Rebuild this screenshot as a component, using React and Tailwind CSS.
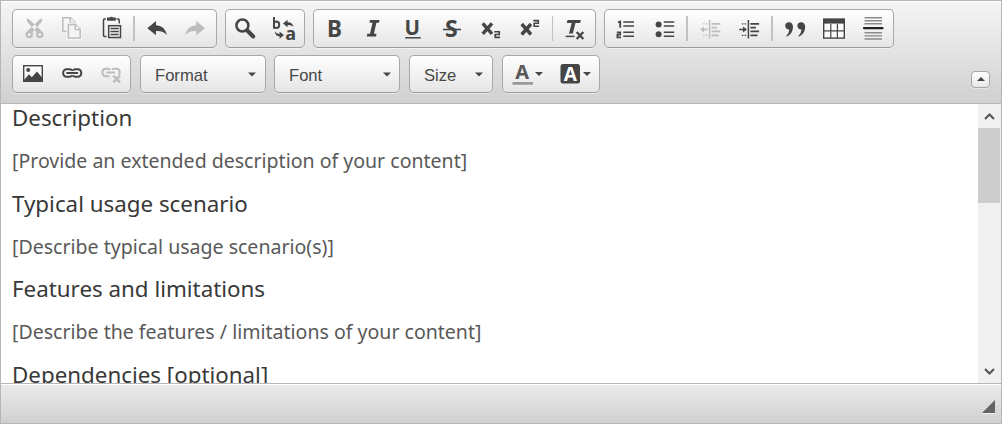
import React from "react";

const D = "#454545";
const L = "#bdbdbd";

function Icon({ x, y = 10, w = 39, h = 37, label, children }) {
  return (
    <svg width={w} height={h} viewBox={`${x} ${y} ${w} ${h}`} className="block shrink-0" role="img" aria-label={label}>
      {children}
    </svg>
  );
}

function Group({ className = "", children }) {
  return (
    <div
      className={`flex shrink-0 items-center rounded-[5px] border border-[#a8a8a8] border-b-[#9a9a9a] bg-gradient-to-b from-white to-[#e5e5e5] shadow-[0_1px_0_rgba(255,255,255,0.5)] ${className}`}
    >
      {children}
    </div>
  );
}

function Combo({ label, className }) {
  return (
    <Group className={`h-[38px] justify-between pl-[14px] ${className}`}>
      <span className="pt-[4px] font-['Liberation_Sans',Arial,sans-serif] text-[16.6px] leading-[20px] text-[#474747]">{label}</span>
      <svg width="8" height="5" viewBox="0 0 8 5" className="block">
        <path d="M0 .5H8L4 4.5Z" fill={D} />
      </svg>
    </Group>
  );
}

function Separator({ className = "w-[2px]" }) {
  return <div className={`h-[25px] shrink-0 bg-[#c2c2c2] ${className}`} />;
}

const glyph = { fontFamily: "'Noto Sans', 'Open Sans', sans-serif", fontWeight: 700, fill: D };

function ClipboardGroup() {
  return (
    <Group className="h-[39px] w-[205px]">
      <Icon x={13} w={40} label="Cut">
        <g fill="none" stroke={L} strokeWidth="2.2">
          <circle cx="29.3" cy="34.4" r="2.6" />
          <circle cx="39.8" cy="34.4" r="2.6" />
        </g>
        <path d="M27.2 18.2L29.3 19.4L41 30.6L37.6 33.5L27.8 22.5Q26.1 20 27.2 18.2ZM41.8 18.2L39.7 19.4L28 30.6L31.4 33.5L41.2 22.5Q42.9 20 41.8 18.2Z" fill={L} />
      </Icon>
      <Icon x={53} label="Copy">
        <g fill="#f5f5f5" stroke={L} strokeWidth="1.5">
          <path d="M62.8 17.8H70.5L75.2 22.5V31.3H62.8Z" />
          <path d="M70.3 17.8V22.7H75.2" />
          <path d="M68.4 24.5H75.5L80.2 29.2V37.9H68.4Z" stroke="#f5f5f5" strokeWidth="4" />
          <path d="M68.4 24.5H75.5L80.2 29.2V37.9H68.4Z" />
          <path d="M75.3 24.5V29.4H80.2" />
        </g>
      </Icon>
      <Icon x={92} w={40} label="Paste">
        <path d="M106 19H104.5Q103.5 19 103.5 20V35.5Q103.5 36.5 104.5 36.5H106.5M116.5 19H118.2Q119.2 19 119.2 20V23.5" fill="none" stroke={D} strokeWidth="1.5" />
        <path d="M107 17.5H109.5Q111.3 16 113.2 17.5H115.8V20.8H107Z" fill={D} />
        <rect x="108.7" y="25.7" width="11.8" height="11.8" fill="#f5f5f5" stroke={D} strokeWidth="1.5" />
        <path d="M110.5 28.5H118.7M110.5 31.5H118.7M110.5 34.5H118.7" stroke={D} strokeWidth="1.4" />
      </Icon>
      <div className="w-px shrink-0" />
      <Separator />
      <Icon x={136} w={40} label="Undo">
        <path d="M148.3 28.2L157 21V25.3Q165.5 25.5 168 35Q163.5 30.2 157 31V35.3Z" fill={D} />
      </Icon>
      <Icon x={176} w={38} label="Redo">
        <path d="M206 28.2L197.3 21V25.3Q188.5 25.5 186.2 35Q190.7 30.2 197.3 31V35.3Z" fill={L} />
      </Icon>
    </Group>
  );
}

function SearchGroup() {
  return (
    <Group className="h-[39px] w-[80px]">
      <Icon x={226} label="Find">
        <circle cx="242.4" cy="25.5" r="6" fill="none" stroke={D} strokeWidth="2.5" />
        <path d="M247.3 30.5L253.2 36.5" stroke={D} strokeWidth="4" strokeLinecap="round" />
      </Icon>
      <Icon x={265} label="Replace">
        <path d="M274 17V28.7M274 22.7Q275 21.4 276.8 21.4Q279.2 21.6 279.2 24.8Q279.2 28 276.5 28Q275 28 274 27" fill="none" stroke={D} strokeWidth="2" />
        <text x="285.2" y="39.6" fontSize="18" style={glyph}>a</text>
        <path d="M283 23.5L287.6 19.7V22.4Q291.5 21.8 293.7 26.7Q290.8 24.8 287.6 25V27.3Z" fill={D} />
        <path d="M284 35L279.6 31.8V34Q276.3 34.2 274.7 31.2Q275.5 36.7 279.6 36.3V38.7Z" fill={D} />
      </Icon>
    </Group>
  );
}

function StyleGroup() {
  return (
    <Group className="h-[39px] w-[283px]">
      <Icon x={314} w={40} label="Bold">
        <text x="327" y="36.5" fontSize="22.5" style={glyph}>B</text>
      </Icon>
      <Icon x={354} label="Italic">
        <path d="M370 20H379.4L379 22.7H376.4L373.9 33.8H376.6L376 36.5H366.8L367.3 33.8H370L372.5 22.7H369.5Z" fill={D} />
      </Icon>
      <Icon x={393} label="Underline">
        <text x="404.4" y="35" fontSize="20.5" style={glyph}>U</text>
        <path d="M405.2 37.8H420.7" stroke={D} strokeWidth="1.5" />
      </Icon>
      <Icon x={432} label="Strikethrough">
        <text x="445" y="36.6" fontSize="23" style={glyph}>S</text>
        <path d="M443 29.5H461" stroke={D} strokeWidth="1.6" />
      </Icon>
      <Icon x={471} label="Subscript">
        <path d="M482.7 23.4L492 33.9M492 23.4L482.7 33.9" stroke={D} strokeWidth="3.4" />
        <path d="M494.3 31.8H499.3V34.5H495.2V37.4H500" fill="none" stroke={D} strokeWidth="1.6" />
      </Icon>
      <Icon x={510} label="Superscript">
        <path d="M521.7 24L531 34.5M531 24L521.7 34.5" stroke={D} strokeWidth="3.4" />
        <path d="M533.3 20.6H538.3V23.3H534.2V26.2H539" fill="none" stroke={D} strokeWidth="1.6" />
      </Icon>
      <div className="w-[3px] shrink-0" />
      <Separator className="w-px" />
      <Icon x={553} label="Remove Format">
        <path d="M567.5 20H580.8L580.2 23H575.5L572.8 33.5H569L571.7 23H566.8Z" fill={D} />
        <path d="M565.7 36.4H574.5" stroke={D} strokeWidth="1.5" />
        <path d="M576.7 32L583.3 39M583.3 32L576.7 39" stroke={D} strokeWidth="2.3" />
      </Icon>
    </Group>
  );
}

function IndentLines({ c, x }) {
  return (
    <g stroke={c}>
      <path d={`M${x} 20V38.5`} strokeWidth="1.5" />
      <path d={`M${x + 2} 23.8H${x + 10.7}M${x + 2} 27.6H${x + 7.5}M${x + 2} 31.4H${x + 10.7}M${x + 2} 35.3H${x + 9}`} strokeWidth="1.7" />
      <path d={`M${x - 6.5} 23.8H${x - 1}M${x - 6.5} 35.3H${x - 1}`} strokeWidth="1.3" strokeDasharray="1.5 1.2" />
    </g>
  );
}

function BlockGroup() {
  return (
    <Group className="h-[39px] w-[290px]">
      <Icon x={605} w={40} label="Numbered List">
        <path d="M618 22.4L620.2 21.5V27.8M616.8 32.4H620.2V34.7H617.4V37.3H621" fill="none" stroke={D} strokeWidth="1.8" />
        <path d="M623.3 22H634M623.3 26H634M623.3 32.2H634M623.3 36.2H634" stroke={D} strokeWidth="1.6" />
      </Icon>
      <Icon x={645} label="Bulleted List">
        <circle cx="658.6" cy="24.4" r="3" fill={D} />
        <circle cx="658.6" cy="34.2" r="3" fill={D} />
        <path d="M663.8 22H674.2M663.8 26H674.2M663.8 32.2H674.2M663.8 36.2H674.2" stroke={D} strokeWidth="1.6" />
      </Icon>
      <div className="w-[2px] shrink-0" />
      <Separator />
      <Icon x={688} w={41} label="Decrease Indent">
        <IndentLines c={L} x={709.6} />
        <path d="M707.5 29.5H702" stroke={L} strokeWidth="1.6" />
        <path d="M700.2 29.5L704 26.6V32.4Z" fill={L} />
      </Icon>
      <Icon x={729} w={41} label="Increase Indent">
        <IndentLines c={D} x={748.4} />
        <path d="M739.3 29.5H744" stroke={D} strokeWidth="1.6" />
        <path d="M747 29.5L743 26.4V32.6Z" fill={D} />
      </Icon>
      <div className="w-px shrink-0" />
      <Separator />
      <Icon x={773} w={42} label="Block Quote">
        <path d="M788.8 22.3Q792.9 22.3 793 27Q793 33.4 786.6 36.8L786.2 36Q789.3 33 789.3 29.5Q785.2 29.4 785.2 25.8Q785.3 22.5 788.8 22.3Z" fill={D} />
        <path d="M801 22.3Q805.1 22.3 805.2 27Q805.2 33.4 798.8 36.8L798.4 36Q801.5 33 801.5 29.5Q797.4 29.4 797.4 25.8Q797.5 22.5 801 22.3Z" fill={D} />
      </Icon>
      <Icon x={815} label="Table">
        <rect x="823.7" y="19.3" width="20.6" height="18.8" fill="#fafafa" stroke={D} strokeWidth="1.4" />
        <path d="M823 18.6H845V23.6H823Z" fill={D} />
        <path d="M824 30.8H844M830.8 24V38M837.4 24V38" stroke={D} strokeWidth="1.2" />
      </Icon>
      <Icon x={854} label="Horizontal Line">
        <path d="M864.5 17.7H882M864.5 20.8H882M864.5 23.7H882M864.5 32.8H882M864.5 35.9H882M864.5 39H882" stroke="#8b8b8b" strokeWidth="1.4" />
        <path d="M864 28.2H882.5" stroke="#222" strokeWidth="2.2" strokeLinecap="round" />
      </Icon>
    </Group>
  );
}

function Chain({ c, x, y }) {
  return (
    <g fill="none" stroke={c} strokeWidth="2">
      <rect x={x} y={y} width="9.5" height="7.6" rx="3.4" />
      <rect x={x + 9} y={y} width="9" height="7.6" rx="3.4" />
      <path d={`M${x + 4} ${y + 3.8}H${x + 14}`} stroke="#f4f4f4" strokeWidth="4.2" />
      <path d={`M${x + 4} ${y + 3.8}H${x + 14}`} strokeWidth="2.2" strokeLinecap="round" />
    </g>
  );
}

function InsertGroup() {
  return (
    <Group className="h-[38px] w-[119px]">
      <Icon x={13} y={56} h={36} label="Image">
        <rect x="23.7" y="65.7" width="18.6" height="15.6" fill="#fafafa" stroke={D} strokeWidth="1.4" />
        <circle cx="28.2" cy="70" r="2" fill={D} />
        <path d="M24 80L29 74.3L31.8 77.2L37 71.5L42 77.5V81H24Z" fill={D} />
      </Icon>
      <Icon x={52} y={56} h={36} label="Link">
        <Chain c={D} x={63.2} y={69.2} />
      </Icon>
      <Icon x={91} y={56} h={36} label="Unlink">
        <g fill="none" stroke={L} strokeWidth="2">
          <path d="M110 69.7Q109 68.7 107.5 68.7H105.6Q102.4 68.7 102.4 72.3Q102.4 76.2 105.6 76.2H109.5M112 69.7Q113 68.7 114.5 68.7H116.6Q119.7 68.7 119.7 72.3Q119.7 74 118.7 74.8M106.3 72.5H115" />
          <path d="M113.3 75.7L120 82.3M120 75.7L113.3 82.3" strokeWidth="2.5" />
        </g>
      </Icon>
    </Group>
  );
}

function ColorGroup() {
  return (
    <Group className="h-[38px] w-[98px]">
      <Icon x={503} y={56} w={48} h={36} label="Text Color">
        <text x="515.2" y="79.3" fontSize="20" style={{ ...glyph, fill: "#585858" }}>A</text>
        <path d="M512.5 83.4H533" stroke="#959595" strokeWidth="2.6" />
        <path d="M535 72H543L539 76Z" fill={D} />
      </Icon>
      <Icon x={551} y={56} w={48} h={36} label="Background Color">
        <rect x="560.5" y="64" width="19.5" height="19.5" rx="2.5" fill={D} />
        <text x="563.7" y="80.8" fontSize="19" style={{ ...glyph, fill: "#fff" }}>A</text>
        <path d="M583 72H591L587 76Z" fill={D} />
      </Icon>
    </Group>
  );
}

function Toolbar() {
  return (
    <div className="flex h-[103px] shrink-0 justify-between border-b border-[#b6b6b6] bg-gradient-to-b from-[#f5f5f5] to-[#cfd1cf] pl-[11px] pr-[11px] pt-[8px] shadow-[inset_0_1px_0_#fff]">
      <div className="flex flex-col gap-[7px]">
        <div className="flex">
          <ClipboardGroup />
          <div className="w-[8px]" />
          <SearchGroup />
          <div className="w-[8px]" />
          <StyleGroup />
          <div className="w-[8px]" />
          <BlockGroup />
        </div>
        <div className="flex">
          <InsertGroup />
          <div className="w-[9px]" />
          <Combo label="Format" className="w-[126px] pr-[9px]" />
          <div className="w-[8px]" />
          <Combo label="Font" className="w-[126px] pr-[8px]" />
          <div className="w-[9px]" />
          <Combo label="Size" className="w-[84px] pr-[9px]" />
          <div className="w-[9px]" />
          <ColorGroup />
        </div>
      </div>
      <button
        aria-label="Collapse Toolbar"
        className="mb-[15px] flex h-[17px] w-[19px] items-center justify-center self-end rounded-[4px] border border-[#a6a6a6] bg-gradient-to-b from-white to-[#e8e8e8] pb-px shadow-[0_1px_0_#e4e4e4]"
      >
        <svg width="8" height="4" viewBox="0 0 8 4">
          <path d="M0 4H8L4 0Z" fill={D} />
        </svg>
      </button>
    </div>
  );
}

const sections = [
  ["Description", "[Provide an extended description of your content]"],
  ["Typical usage scenario", "[Describe typical usage scenario(s)]"],
  ["Features and limitations", "[Describe the features / limitations of your content]"],
  ["Dependencies [optional]", ""],
];

function Scrollbar() {
  return (
    <div className="flex w-[23px] shrink-0 flex-col justify-between bg-[#f0f0f0]">
      <div>
        <svg width="22" height="24" viewBox="0 0 22 24" className="block">
          <path d="M7 15L11.5 10.5L16 15" fill="none" stroke="#555" strokeWidth="2" />
        </svg>
        <div className="h-[75px] w-[22px] bg-[#cdcdcd]" />
      </div>
      <svg width="22" height="24" viewBox="0 0 22 24" className="block">
        <path d="M7 10L11.5 14.5L16 10" fill="none" stroke="#555" strokeWidth="2" />
      </svg>
    </div>
  );
}

export default function App() {
  return (
    <div className="flex h-[424px] w-[1002px] flex-col overflow-hidden border border-[#b6b6b6] bg-white">
      <Toolbar />
      <div className="flex h-[279px] shrink-0 overflow-hidden bg-white">
        <div className="flex-1 overflow-hidden pl-[11px] font-['Noto_Sans',sans-serif]">
          {sections.map(([title, body]) => (
            <section key={title} className="h-[85.6px]">
              <h2 className="h-[43px] text-[22.35px] leading-[28px] text-[#383838]">{title}</h2>
              <p className="text-[19.55px] leading-[28px] text-[#595959]">{body}</p>
            </section>
          ))}
        </div>
        <Scrollbar />
      </div>
      <div className="flex flex-1 items-end justify-end border-t border-[#b6b6b6] bg-gradient-to-b from-[#ebebeb] to-[#cfd1cf] pb-[9px] pr-[6px] shadow-[inset_0_1px_0_#fff]">
        <svg width="13" height="14" viewBox="0 0 13 14" className="block">
          <path d="M0 13H13V14H0Z" fill="#eee" />
          <path d="M13 0V13H0Z" fill="#656565" />
        </svg>
      </div>
    </div>
  );
}
